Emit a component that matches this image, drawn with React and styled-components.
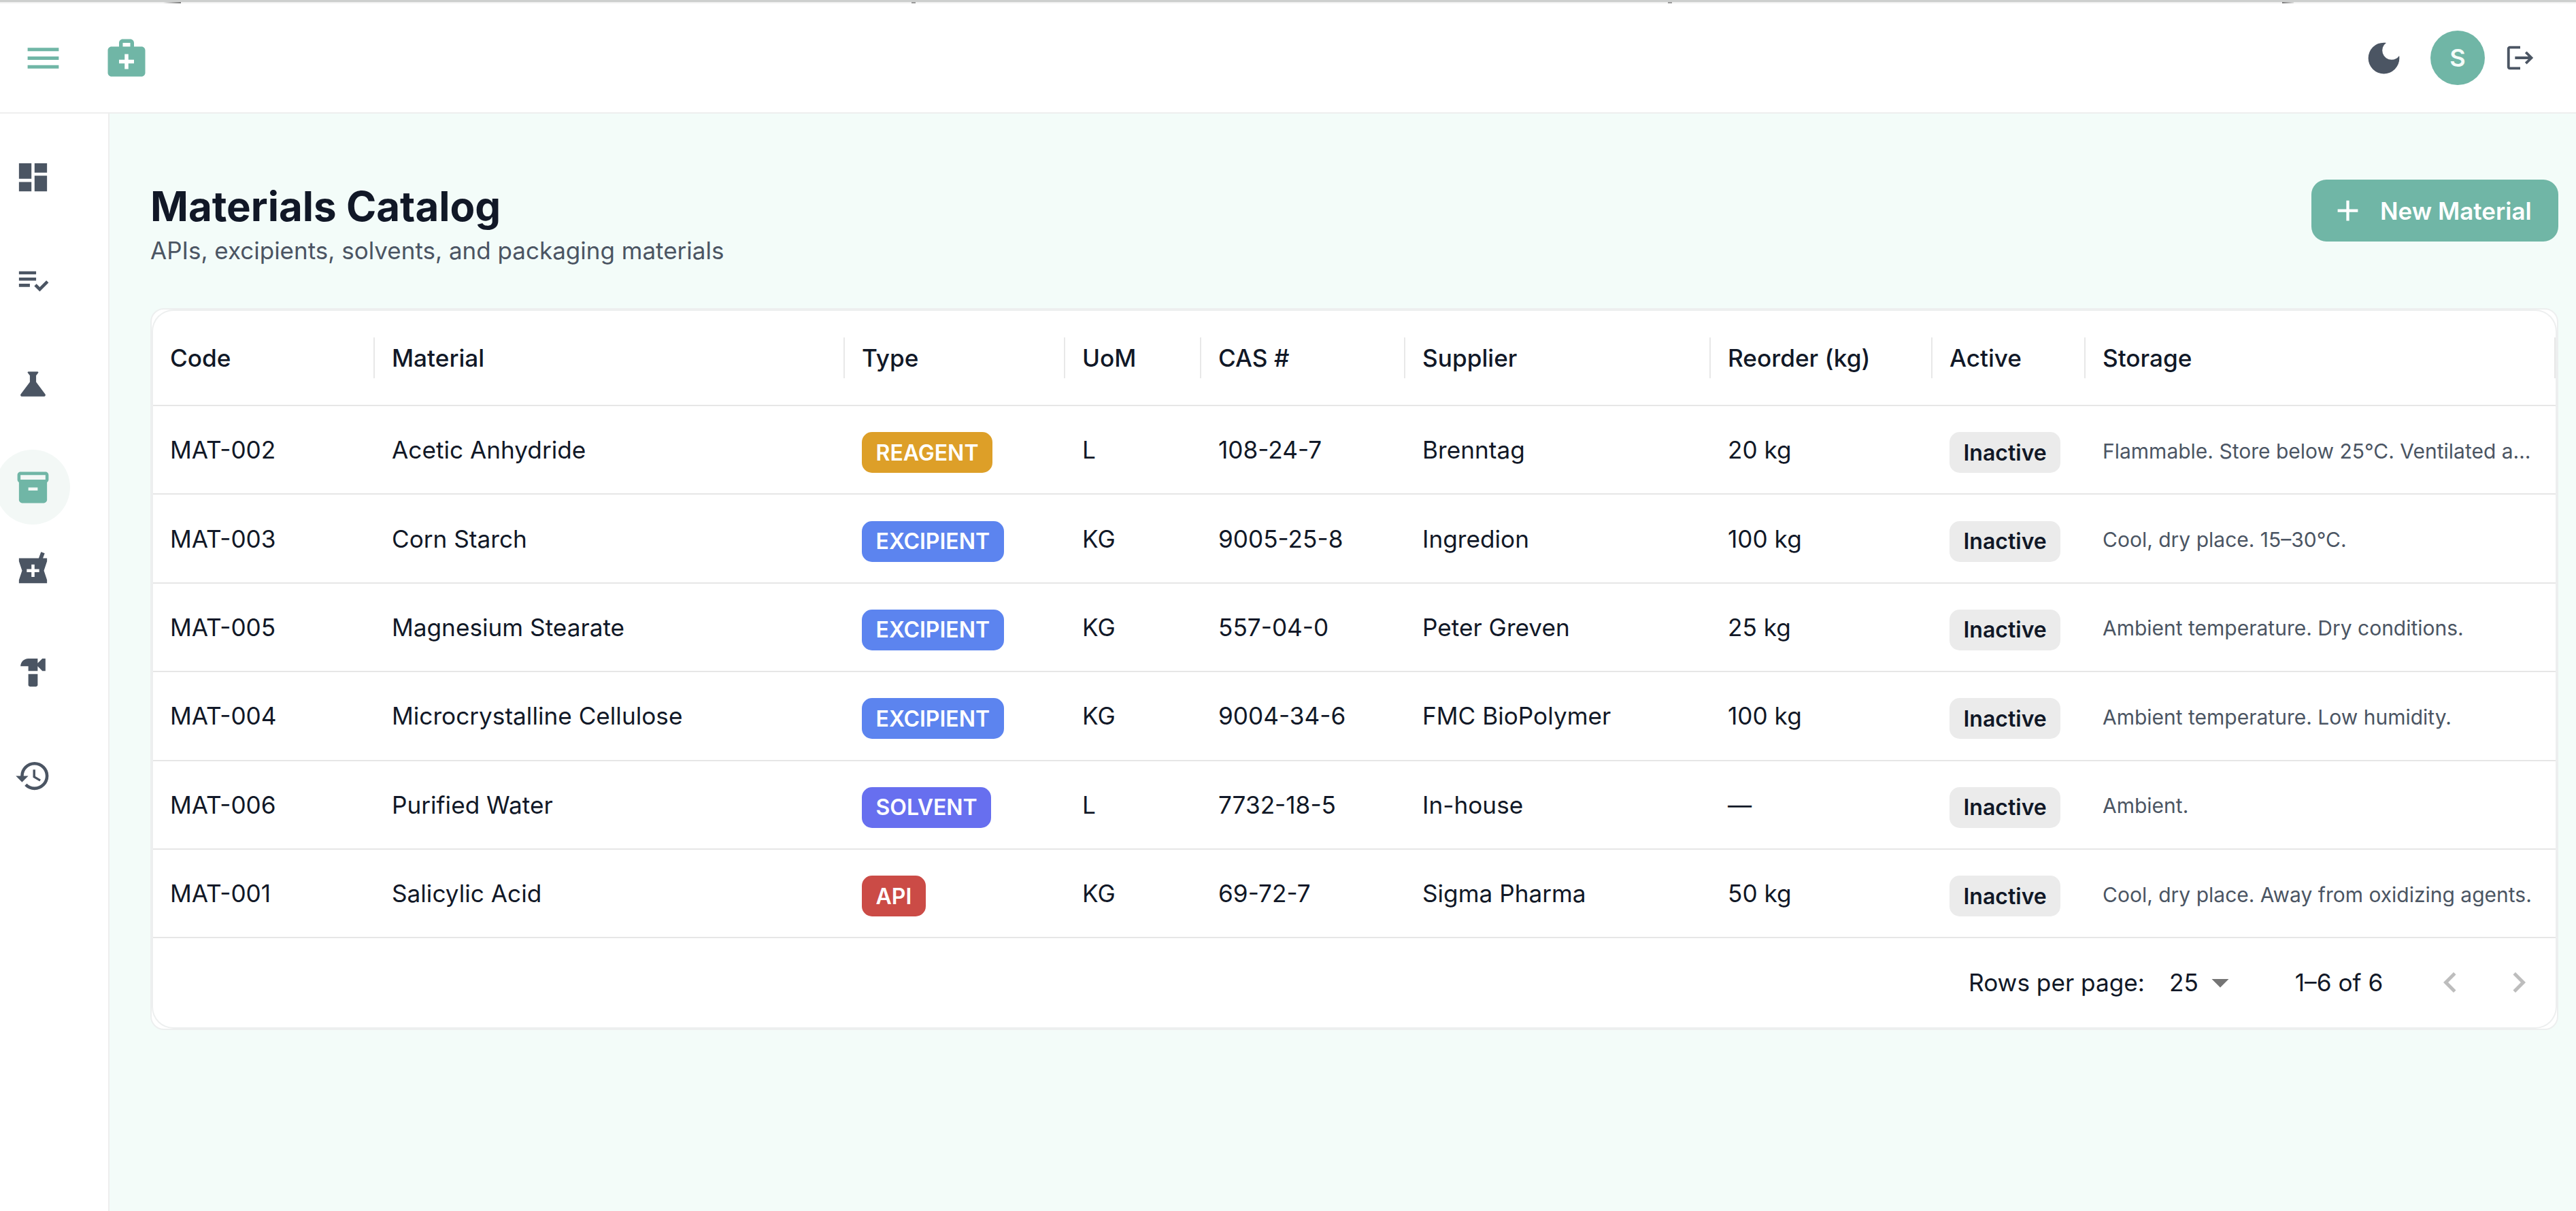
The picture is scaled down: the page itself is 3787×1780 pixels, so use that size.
import React from "react"
import styled, { createGlobalStyle } from "styled-components"
import {
  MdMenu,
  MdMedicalServices,
  MdDarkMode,
  MdLogout,
  MdDashboard,
  MdPlaylistAddCheck,
  MdScience,
  MdInventory2,
  MdLocalPharmacy,
  MdHardware,
  MdHistory,
  MdAdd,
  MdChevronLeft,
  MdChevronRight,
  MdArrowDropDown,
} from "react-icons/md"

const GlobalStyle = createGlobalStyle`
  html, body {
    margin: 0;
    padding: 0;
    background: #fff;
    font-family: Inter, "Liberation Sans", sans-serif;
  }
  * { box-sizing: border-box; }
`

const TEAL = "#70b6a6"
const SLATE = "#4b5563"
const INK = "#111827"
const EDGE = "#edefef"
const COLUMNS = "326px 691px 324px 200px 300px 449px 326px 225px 691px"

const Page = styled.div`
  width: 3787px;
  height: 1780px;
  display: flex;
  flex-direction: column;
  overflow: hidden;
`
const TopLine = styled.div`
  height: 3px;
  background: #cdcfce;
  flex: none;
`
const TopShade = styled.div`
  height: 2px;
  flex: none;
  background: linear-gradient(
    90deg,
    #f1f1f1 240px, #777 266px, #f1f1f1 266px,
    #f1f1f1 1340px, #999 1340px, #999 1346px, #f1f1f1 1346px,
    #f1f1f1 2452px, #999 2452px, #999 2458px, #f1f1f1 2458px,
    #f1f1f1 3355px, #777 3355px, #ddd 3372px, #f1f1f1 3372px
  );
`
const Header = styled.header`
  height: 162px;
  flex: none;
  display: flex;
  align-items: center;
  padding: 0 0 0 33px;
  background: #fff;
  border-bottom: 2px solid #eeeeee;
`
const MenuButton = styled(MdMenu)`
  font-size: 61px;
  color: ${TEAL};
`
const Logo = styled(MdMedicalServices)`
  font-size: 66px;
  color: ${TEAL};
  margin-left: 59px;
`
const HeaderRight = styled.div`
  margin-left: auto;
  display: flex;
  align-items: center;
  padding-right: 59px;
`
const Moon = styled(MdDarkMode)`
  font-size: 61px;
  color: ${SLATE};
`
const Avatar = styled.div`
  width: 80px;
  height: 80px;
  margin-left: 38px;
  border-radius: 50%;
  background: ${TEAL};
  color: #f4fcf9;
  font-size: 36px;
  font-weight: 600;
  display: flex;
  align-items: center;
  justify-content: center;
`
const Logout = styled(MdLogout)`
  font-size: 46px;
  color: ${SLATE};
  margin-left: 29px;
`
const Body = styled.div`
  flex: 1;
  display: flex;
  min-height: 0;
`
const Sidebar = styled.nav`
  width: 161px;
  flex: none;
  background: #fff;
  border-right: 2px solid #eeeeee;
  padding-top: 17px;
  overflow: hidden;
`
const NavItem = styled.div`
  width: 110px;
  height: 152px;
  margin-left: -7px;
  margin-bottom: ${(p) => (p.$active ? "-32px" : "0")};
  display: flex;
  align-items: center;
  justify-content: center;
  font-size: 55px;
  color: ${(p) => (p.$active ? TEAL : SLATE)};
`
const NavCircle = styled.div`
  width: 110px;
  height: 110px;
  border-radius: 50%;
  background: ${(p) => (p.$active ? "#f3f8f6" : "transparent")};
  display: flex;
  align-items: center;
  justify-content: center;
`
const Main = styled.main`
  flex: 1;
  min-width: 0;
  background: #f3fcf9;
  padding: 97px 26px 0 60px;
`
const TitleRow = styled.div`
  display: flex;
  justify-content: space-between;
  align-items: flex-start;
  height: 189px;
`
const TitleBlock = styled.div`
  padding-top: 3px;
`
const Title = styled.h1`
  margin: 0;
  font-size: 60px;
  line-height: 72px;
  font-weight: 700;
  color: ${INK};
`
const Subtitle = styled.p`
  margin: 9px 0 0;
  font-size: 35px;
  line-height: 40px;
  color: ${SLATE};
`
const NewButton = styled.div`
  width: 363px;
  height: 91px;
  border-radius: 22px;
  background: ${TEAL};
  color: #fff;
  font-size: 35px;
  font-weight: 600;
  display: flex;
  align-items: center;
  padding-left: 28px;
  gap: 22px;
  svg { font-size: 51px; }
`
const Card = styled.section`
  width: 3540px;
  height: 1061px;
  background: #fff;
  border: 2px solid ${EDGE};
  border-radius: 20px;
  padding: 2px;
`
const CardInner = styled.div`
  height: 100%;
  border-radius: 30px;
  box-shadow: 0 0 0 2px ${EDGE};
  overflow: hidden;
`
const HeadRow = styled.div`
  display: grid;
  grid-template-columns: ${COLUMNS};
  height: 140px;
  border-bottom: 2px solid #e6e6e6;
  align-items: center;
`
const HeadCell = styled.div`
  height: 60px;
  display: flex;
  align-items: center;
  padding-left: 25px;
  font-size: 35.2px;
  font-weight: 500;
  color: ${INK};
  border-right: 2px solid #e8e8e8;
`
const Row = styled.div`
  display: grid;
  grid-template-columns: ${COLUMNS};
  height: 130.4px;
  border-bottom: 2px solid #e6e6e6;
  align-items: center;
`
const Cell = styled.div`
  padding-left: 25px;
  font-size: 35.2px;
  color: ${INK};
  min-width: 0;
`
const Chip = styled.span`
  display: inline-flex;
  align-items: center;
  height: 60px;
  margin-top: 8px;
  padding: 0 20.5px;
  border-radius: 15px;
  font-size: 32px;
  font-weight: 600;
  background: ${(p) => p.$bg};
  color: ${(p) => p.$fg};
`
const StorageText = styled.div`
  margin-top: 3px;
  padding-left: 25px;
  padding-right: 32px;
  font-size: 30px;
  color: ${SLATE};
  white-space: nowrap;
  overflow: hidden;
  text-overflow: ellipsis;
`
const Footer = styled.div`
  height: 130px;
  display: flex;
  align-items: center;
  font-size: 35.2px;
  color: ${INK};
  padding-left: 2669px;
`
const RowsValue = styled.span`
  margin-left: 36px;
`
const Caret = styled(MdArrowDropDown)`
  font-size: 60px;
  color: #757575;
  margin-left: 2px;
`
const PageRange = styled.span`
  margin-left: 80px;
`
const PagerIcon = styled.span`
  display: flex;
  font-size: 60px;
  color: #bdbdbd;
  margin-left: ${(p) => p.$gap}px;
`

const TYPE_COLORS = {
  REAGENT: "#dd9f28",
  EXCIPIENT: "#5c84ef",
  SOLVENT: "#676fef",
  API: "#cb4b46",
}

const headers = ["Code", "Material", "Type", "UoM", "CAS #", "Supplier", "Reorder (kg)", "Active", "Storage"]

const materials = [
  ["MAT-002", "Acetic Anhydride", "REAGENT", "L", "108-24-7", "Brenntag", "20 kg", "Flammable. Store below 25°C. Ventilated area."],
  ["MAT-003", "Corn Starch", "EXCIPIENT", "KG", "9005-25-8", "Ingredion", "100 kg", "Cool, dry place. 15–30°C."],
  ["MAT-005", "Magnesium Stearate", "EXCIPIENT", "KG", "557-04-0", "Peter Greven", "25 kg", "Ambient temperature. Dry conditions."],
  ["MAT-004", "Microcrystalline Cellulose", "EXCIPIENT", "KG", "9004-34-6", "FMC BioPolymer", "100 kg", "Ambient temperature. Low humidity."],
  ["MAT-006", "Purified Water", "SOLVENT", "L", "7732-18-5", "In-house", "—", "Ambient."],
  ["MAT-001", "Salicylic Acid", "API", "KG", "69-72-7", "Sigma Pharma", "50 kg", "Cool, dry place. Away from oxidizing agents."],
]

const navIcons = [MdDashboard, MdPlaylistAddCheck, MdScience, MdInventory2, MdLocalPharmacy, MdHardware, MdHistory]

export default function App() {
  return (
    <Page>
      <GlobalStyle />
      <TopLine />
      <TopShade />
      <Header>
        <MenuButton />
        <Logo />
        <HeaderRight>
          <Moon />
          <Avatar>S</Avatar>
          <Logout />
        </HeaderRight>
      </Header>
      <Body>
        <Sidebar>
          {navIcons.map((Icon, i) => (
            <NavItem key={i} $active={i === 3}>
              <NavCircle $active={i === 3}>
                <Icon />
              </NavCircle>
            </NavItem>
          ))}
        </Sidebar>
        <Main>
          <TitleRow>
            <TitleBlock>
              <Title>Materials Catalog</Title>
              <Subtitle>APIs, excipients, solvents, and packaging materials</Subtitle>
            </TitleBlock>
            <NewButton>
              <MdAdd />
              New Material
            </NewButton>
          </TitleRow>
          <Card>
            <CardInner>
              <HeadRow>
                {headers.map((h) => (
                  <HeadCell key={h}>{h}</HeadCell>
                ))}
              </HeadRow>
              {materials.map((m) => (
                <Row key={m[0]}>
                  <Cell>{m[0]}</Cell>
                  <Cell>{m[1]}</Cell>
                  <Cell>
                    <Chip $bg={TYPE_COLORS[m[2]]} $fg="#fff">{m[2]}</Chip>
                  </Cell>
                  <Cell>{m[3]}</Cell>
                  <Cell>{m[4]}</Cell>
                  <Cell>{m[5]}</Cell>
                  <Cell>{m[6]}</Cell>
                  <Cell>
                    <Chip $bg="#ebebeb" $fg={INK}>Inactive</Chip>
                  </Cell>
                  <StorageText>{m[7]}</StorageText>
                </Row>
              ))}
              <Footer>
                Rows per page:
                <RowsValue>25</RowsValue>
                <Caret />
                <PageRange>1–6 of 6</PageRange>
                <PagerIcon $gap={69}><MdChevronLeft /></PagerIcon>
                <PagerIcon $gap={41}><MdChevronRight /></PagerIcon>
              </Footer>
            </CardInner>
          </Card>
        </Main>
      </Body>
    </Page>
  )
}
